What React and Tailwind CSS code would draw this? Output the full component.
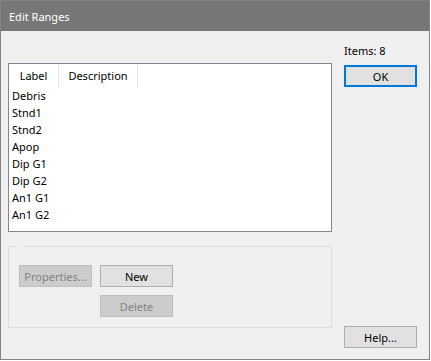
import React from 'react';

const items = ['Debris', 'Stnd1', 'Stnd2', 'Apop', 'Dip G1', 'Dip G2', 'An1 G1', 'An1 G2'];

const font = { fontFamily: '"Noto Sans", "Open Sans", sans-serif' };

const Button = ({ children, disabled, primary, className = '' }) => {
    let look = 'bg-[#e1e1e1] border border-[#adadad] text-black';
    if (disabled) look = 'bg-[#cccccc] border border-[#bfbfbf] text-[#838383]';
    if (primary) look = 'bg-[#e1e1e1] border-2 border-[#0078d7] text-black';
    return (
        <div className={`w-[73px] h-[22px] flex items-center justify-center text-[11px] leading-none ${look} ${className}`}>
            {children}
        </div>
    );
};

const App = () => {
    return (
        <div className="w-[431px] h-[361px] bg-white text-[11px]" style={font}>
            <div className="w-[430px] h-[360px] border border-[#838383] bg-[#f0f0f0] flex flex-col">
                {/* Title bar */}
                <div className="h-[30px] bg-[#777777] text-white flex items-center pl-[8px] pt-[2px] text-[11px]">
                    Edit Ranges
                </div>

                {/* Body */}
                <div className="flex-1 flex px-[7px]">
                    {/* Left column */}
                    <div className="w-[324px] pt-[32px] flex flex-col">
                        <div className="h-[169px] border border-[#828790] bg-white flex flex-col">
                            <div className="flex h-[24px] text-black">
                                <div className="w-[50px] flex items-center justify-center border-r border-[#e5e5e5]">Label</div>
                                <div className="w-[79px] flex items-center justify-center border-r border-[#e5e5e5]">Description</div>
                            </div>
                            <div className="flex flex-col pl-[3px]">
                                {items.map((it) => (
                                    <div key={it} className="h-[17px] flex items-center text-black">{it}</div>
                                ))}
                            </div>
                        </div>

                        {/* Group box */}
                        <div className="relative mt-[14px] h-[82px] border border-[#dcdcdc] pt-[18px] pl-[10px]">
                            <span className="absolute -top-[1px] left-[7px] w-[8px] h-[1px] bg-[#f0f0f0]"></span>
                            <div className="flex gap-[8px]">
                                <Button disabled>Properties...</Button>
                                <div className="flex flex-col gap-[8px]">
                                    <Button>New</Button>
                                    <Button disabled>Delete</Button>
                                </div>
                            </div>
                        </div>
                    </div>

                    {/* Right column */}
                    <div className="ml-[12px] w-[73px] flex flex-col pt-[12px] pb-[11px]">
                        <div className="h-[16px] flex items-center text-black">Items: 8</div>
                        <Button primary className="mt-[6px]">OK</Button>
                        <Button className="mt-auto">Help...</Button>
                    </div>
                </div>
            </div>
        </div>
    );
};

export default App;
